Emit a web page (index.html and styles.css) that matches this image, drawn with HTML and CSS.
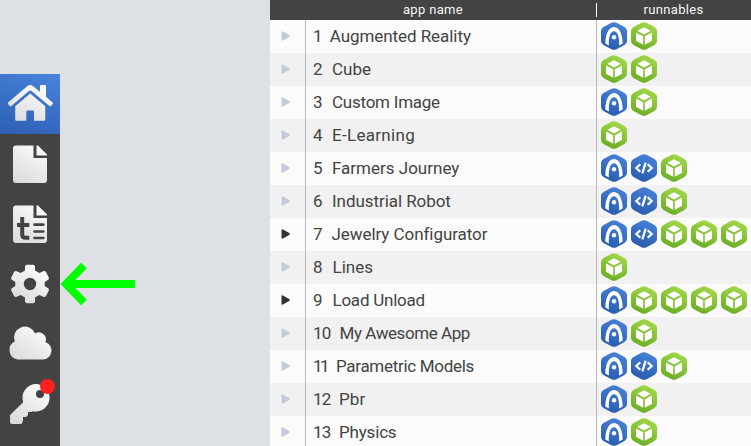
FILE: index.html
```html
<!DOCTYPE html>
<html lang="en">
<head>
<meta charset="utf-8">
<title>App Manager</title>
<link rel="stylesheet" href="styles.css">
</head>
<body>
<svg class="defs" width="0" height="0" aria-hidden="true">
  <defs>
    <linearGradient id="blue" x1=".7" y1="0" x2=".3" y2="1"><stop offset="0" stop-color="#4782d8"/><stop offset="1" stop-color="#285bad"/></linearGradient>
    <linearGradient id="green" x1=".7" y1="0" x2=".3" y2="1"><stop offset="0" stop-color="#a3d949"/><stop offset="1" stop-color="#6aac25"/></linearGradient>
    <linearGradient id="silver" gradientUnits="userSpaceOnUse" x1="42" y1="12" x2="18" y2="50"><stop offset="0" stop-color="#fbfbfb"/><stop offset="1" stop-color="#dadada"/></linearGradient>
  </defs>
  <symbol id="ar" viewBox="0 0 26 28">
    <path fill="url(#blue)" d="M10.500.8Q13-.5 15.500.8L23.500 5Q26 6.500 26 9V19Q26 21.500 23.500 23L15.500 27.200Q13 28.500 10.500 27.200L2.500 23Q0 21.500 0 19V9Q0 6.500 2.500 5Z"/>
    <path fill="#fff" fill-rule="evenodd" d="M4.300 21.500C4.300 14 7 4.900 13 4.900S21.700 14 21.700 21.500L18.100 23.400C18.500 16 17 9.200 13 9.200S7.500 16 7.900 23.400Z"/>
    <circle cx="13" cy="15.300" r="2.200" fill="#fff"/>
  </symbol>
  <symbol id="web" viewBox="0 0 26 28">
    <path fill="url(#blue)" d="M10.500.8Q13-.5 15.500.8L23.500 5Q26 6.500 26 9V19Q26 21.500 23.500 23L15.500 27.200Q13 28.500 10.500 27.200L2.500 23Q0 21.500 0 19V9Q0 6.500 2.500 5Z"/>
    <path fill="none" stroke="#fff" stroke-width="2.200" d="M9.300 10.300 5.300 14l4 3.700M16.700 10.300l4 3.700-4 3.700M14.700 8.600 11.300 19.400"/>
  </symbol>
  <symbol id="cube" viewBox="0 0 26 28">
    <path fill="url(#green)" d="M10.500.8Q13-.5 15.500.8L23.500 5Q26 6.500 26 9V19Q26 21.500 23.500 23L15.500 27.200Q13 28.500 10.500 27.200L2.500 23Q0 21.500 0 19V9Q0 6.500 2.500 5Z"/>
    <path fill="#fff" d="M13 5.200 19.700 8.800 13 12.500 6.300 8.800ZM5 10.400 12.200 14.300V22.800L5 18.800ZM21 10.400 13.800 14.300V22.800L21 18.800Z"/>
  </symbol>
  <symbol id="play" viewBox="0 0 9 10"><path fill="currentColor" d="M.5 1.500Q.7 0 2 .4L8.200 4Q9.400 5 8.200 6L2 9.600Q.7 10 .5 8.500Z"/></symbol>
</svg>

<div class="app">
  <nav class="sidebar">
    <a class="tool active"><svg viewBox="0 0 60 60"><g fill="url(#silver)">
      <path d="M40 17.700V12Q40 11 41 11H45Q46 11 46 12V22.700L52.600 28.500Q53.300 29.300 52.600 30.100L51 31.900Q50.200 32.600 49.400 31.900L31.500 17Q30.200 16 28.900 17L11.400 31.900Q10.600 32.600 9.800 31.900L8.100 30.100Q7.400 29.300 8.100 28.500L27.200 12.200Q30.200 9.700 33.200 12.200Z"/>
      <path d="M30.200 19.500 45.300 32.200V45.500Q45.300 46.800 44 46.800H34V37.500Q34 36.500 33 36.500H27.300Q26.300 36.500 26.300 37.500V46.800H16.500Q15.200 46.800 15.200 45.500V32.200Z"/></g></svg></a>
    <a class="tool"><svg viewBox="0 0 60 60"><g fill="url(#silver)">
      <path d="M16 11.500H33.500V24H47V46Q47 49 44 49H16Q13 49 13 46V14.500Q13 11.500 16 11.500Z"/><path d="M36.500 11.500H38L47 20.500V21.500H36.500Z"/></g></svg></a>
    <a class="tool"><svg viewBox="0 0 60 60"><g fill="url(#silver)">
      <path d="M16 11.500H33.500V24H47V46Q47 49 44 49H16Q13 49 13 46V14.500Q13 11.500 16 11.500Z"/><path d="M36.500 11.500H38L47 20.500V21.500H36.500Z"/></g>
      <path fill="none" stroke="#434343" stroke-width="4" d="M22.200 23V40.500Q22.200 43.800 25.500 43.800H29.300M17 31H29.300"/>
      <path fill="none" stroke="#434343" stroke-width="2.700" stroke-linecap="round" d="M34.500 30.700H43.300M34.500 37.500H43.300M34.500 44H43.300"/></svg></a>
    <a class="tool"><svg viewBox="0 0 60 60">
      <path fill="url(#silver)" fill-rule="evenodd" d="M26.500 10.700H33.500L35 12V16.500L39.300 19 43.800 17Q45.300 16.700 46 18L49 24 48.500 25.500 44.700 28V32L48.500 34.500 49 36 46 42Q45.300 43.300 43.800 43L39.300 41 35 43.500V48L33.500 49.300H26.500L25 48V43.500L20.700 41 16.200 43Q14.700 43.300 14 42L11 36 11.500 34.500 15.300 32V28L11.500 25.500 11 24 14 18Q14.700 16.700 16.200 17L20.700 19 25 16.500V12ZM30 23.800A6.200 6.200 0 1 0 30 36.200 6.200 6.200 0 1 0 30 23.800Z"/></svg></a>
    <a class="tool"><svg viewBox="0 0 60 60"><path fill="url(#silver)" d="M17.500 45.500A9.600 9.600 0 0 1 14.700 27.500A10.700 10.700 0 0 1 35 19.600A7 7 0 0 1 45.400 28A9 9 0 0 1 43 45.500Z"/></svg></a>
    <a class="tool"><svg viewBox="0 0 60 60"><path fill="url(#silver)" fill-rule="evenodd" d="M36.400 10A13.800 13.800 0 1 1 32.500 37.200L31.500 38H28V41L26 43H23V47L21.500 50H12Q10 50 10 48V41L23.200 28.300A13.800 13.800 0 0 1 36.400 10ZM40 16A4 4 0 1 0 40 24 4 4 0 1 0 40 16Z"/></svg><span class="badge"></span></a>
  </nav>

  <div class="canvas"><svg class="arrow" viewBox="0 0 76 44"><path fill="none" stroke="#0f0" stroke-width="8" d="M74 22H8M23 3.500 5 22 23 40.500"/></svg></div>

  <main class="list">
    <div class="head"><span class="col-name">app name</span><span class="col-run">runnables</span></div>
    <div class="row"><span class="toggle"><svg><use href="#play"/></svg></span><span class="label"><i class="n1">1</i><b class="l1">Augmented Reality</b></span><span class="runs"><svg><use href="#ar"/></svg><svg><use href="#cube"/></svg></span></div>
    <div class="row"><span class="toggle"><svg><use href="#play"/></svg></span><span class="label"><i class="n2">2</i><b class="l2">Cube</b></span><span class="runs"><svg><use href="#cube"/></svg><svg><use href="#cube"/></svg></span></div>
    <div class="row"><span class="toggle"><svg><use href="#play"/></svg></span><span class="label"><i class="n3">3</i><b class="l3">Custom Image</b></span><span class="runs"><svg><use href="#ar"/></svg><svg><use href="#cube"/></svg></span></div>
    <div class="row"><span class="toggle"><svg><use href="#play"/></svg></span><span class="label"><i class="n4">4</i><b class="l4">E-Learning</b></span><span class="runs"><svg><use href="#cube"/></svg></span></div>
    <div class="row"><span class="toggle"><svg><use href="#play"/></svg></span><span class="label"><i class="n5">5</i><b class="l5">Farmers Journey</b></span><span class="runs"><svg><use href="#ar"/></svg><svg><use href="#web"/></svg><svg><use href="#cube"/></svg></span></div>
    <div class="row"><span class="toggle"><svg><use href="#play"/></svg></span><span class="label"><i class="n6">6</i><b class="l6">Industrial Robot</b></span><span class="runs"><svg><use href="#ar"/></svg><svg><use href="#web"/></svg><svg><use href="#cube"/></svg></span></div>
    <div class="row"><span class="toggle on"><svg><use href="#play"/></svg></span><span class="label"><i class="n7">7</i><b class="l7">Jewelry Configurator</b></span><span class="runs"><svg><use href="#ar"/></svg><svg><use href="#web"/></svg><svg><use href="#cube"/></svg><svg><use href="#cube"/></svg><svg><use href="#cube"/></svg></span></div>
    <div class="row"><span class="toggle"><svg><use href="#play"/></svg></span><span class="label"><i class="n8">8</i><b class="l8">Lines</b></span><span class="runs"><svg><use href="#cube"/></svg></span></div>
    <div class="row"><span class="toggle on"><svg><use href="#play"/></svg></span><span class="label"><i class="n9">9</i><b class="l9">Load Unload</b></span><span class="runs"><svg><use href="#ar"/></svg><svg><use href="#cube"/></svg><svg><use href="#cube"/></svg><svg><use href="#cube"/></svg><svg><use href="#cube"/></svg></span></div>
    <div class="row"><span class="toggle"><svg><use href="#play"/></svg></span><span class="label"><i class="n10">10</i><b class="l10">My Awesome App</b></span><span class="runs"><svg><use href="#ar"/></svg><svg><use href="#cube"/></svg></span></div>
    <div class="row"><span class="toggle"><svg><use href="#play"/></svg></span><span class="label"><i class="n11">11</i><b class="l11">Parametric Models</b></span><span class="runs"><svg><use href="#ar"/></svg><svg><use href="#web"/></svg><svg><use href="#cube"/></svg></span></div>
    <div class="row"><span class="toggle"><svg><use href="#play"/></svg></span><span class="label"><i class="n12">12</i><b class="l12">Pbr</b></span><span class="runs"><svg><use href="#ar"/></svg><svg><use href="#cube"/></svg></span></div>
    <div class="row"><span class="toggle"><svg><use href="#play"/></svg></span><span class="label"><i class="n13">13</i><b class="l13">Physics</b></span><span class="runs"><svg><use href="#ar"/></svg><svg><use href="#cube"/></svg></span></div>
  </main>
</div>
</body>
</html>
```
FILE: styles.css
```css
* { box-sizing: border-box; }
body { margin: 0; font-family: Roboto, "Liberation Sans", sans-serif; color: #434343; }
.defs { position: absolute; }
svg { display: block; }
.app { display: flex; width: 751px; height: 446px; overflow: hidden; background: #dde1e6; }
.sidebar { width: 60px; margin-top: 74px; background: #434343; flex: none; }
.tool { display: block; position: relative; width: 60px; height: 60px; }
.tool svg { width: 60px; height: 60px; }
.active { background: linear-gradient(20deg, #2b5fb3, #4983dc); }
.badge { position: absolute; left: 40px; top: 5px; width: 15px; height: 15px; border-radius: 50%; background: #ff2020; }
.canvas { width: 210px; flex: none; padding: 262px 0 0 1px; }
.arrow { width: 76px; height: 44px; }
.list { width: 481px; flex: none; }
.head { display: flex; height: 20px; background: #434343; color: #f6f6f6; font-size: 13px; line-height: 19px; letter-spacing: .35px; text-align: center; }
.col-name { width: 326px; }
.col-run { width: 155px; background: linear-gradient(#fff, #fff) 0 3px / 1px 14px no-repeat; }
.row { display: flex; height: 33px; background: #fbfbfb; }
.row:nth-child(odd) { background: #f1f1f1; }
.toggle { width: 36px; border-right: 1px solid #b8b8b8; padding: 11px 0 0 11px; color: #c4cbd8; }
.toggle.on { color: #333; }
.toggle svg { width: 9px; height: 10px; }
.label { display: flex; width: 291px; border-right: 1px solid #b8b8b8; padding-left: 7px; font-size: 17px; line-height: 33px; white-space: nowrap; }
.label i { font-style: normal; width: 19px; flex: none; }
.label b { font-weight: 400; }
.label .n1 { width: 16.7px; }
.label .n7 { width: 18.5px; }
.label .n8, .label .n9 { width: 19.5px; }
.label .n10 { width: 26.5px; letter-spacing: -.8px; }
.label .n12, .label .n13 { width: 26px; letter-spacing: -.8px; }
.label .n11 { width: 23px; letter-spacing: -2.5px; }
.l1, .l6 { letter-spacing: -.06px; }
.l3, .l9 { letter-spacing: -.24px; }
.l4 { letter-spacing: .3px; }
.l7 { letter-spacing: -.06px; }
.l10 { letter-spacing: -.44px; }
.l11 { letter-spacing: -.3px; }
.l12 { letter-spacing: .1px; }
.l13 { letter-spacing: -.18px; }
.runs { display: flex; gap: 4px; width: 154px; padding: 2px 0 0 4px; }
.runs svg { width: 26px; height: 28px; flex: none; }
```
